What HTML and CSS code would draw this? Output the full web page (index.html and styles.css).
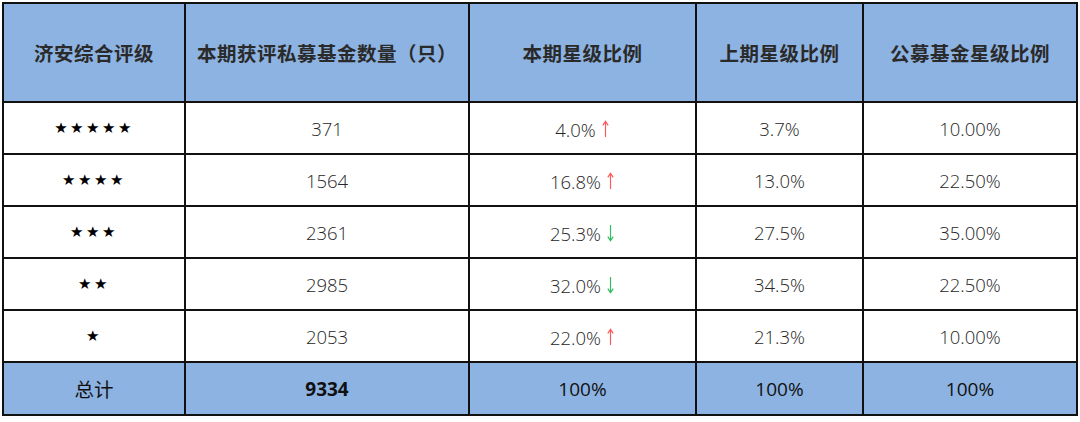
FILE: index.html
```html
<!DOCTYPE html>
<html lang="zh">
<head>
<meta charset="utf-8">
<link rel="stylesheet" href="styles.css">
</head>
<body>
<table class="rating">
  <colgroup>
    <col class="c1"><col class="c2"><col class="c3"><col class="c4"><col class="c5">
  </colgroup>
  <thead>
    <tr>
      <th>济安综合评级</th>
      <th>本期获评私募基金数量（只）</th>
      <th>本期星级比例</th>
      <th>上期星级比例</th>
      <th>公募基金星级比例</th>
    </tr>
  </thead>
  <tbody>
    <tr>
      <td class="stars">★★★★★</td>
      <td>371</td>
      <td><span class="pct">4.0%</span><svg class="arrow up" viewBox="0 0 10 20"><path d="M5 19V2M2 6L5 1.5L8 6"/></svg></td>
      <td>3.7%</td>
      <td>10.00%</td>
    </tr>
    <tr>
      <td class="stars">★★★★</td>
      <td>1564</td>
      <td><span class="pct">16.8%</span><svg class="arrow up" viewBox="0 0 10 20"><path d="M5 19V2M2 6L5 1.5L8 6"/></svg></td>
      <td>13.0%</td>
      <td>22.50%</td>
    </tr>
    <tr>
      <td class="stars">★★★</td>
      <td>2361</td>
      <td><span class="pct">25.3%</span><svg class="arrow down" viewBox="0 0 10 20"><path d="M5 1V18M2 14L5 18.5L8 14"/></svg></td>
      <td>27.5%</td>
      <td>35.00%</td>
    </tr>
    <tr>
      <td class="stars">★★</td>
      <td>2985</td>
      <td><span class="pct">32.0%</span><svg class="arrow down" viewBox="0 0 10 20"><path d="M5 1V18M2 14L5 18.5L8 14"/></svg></td>
      <td>34.5%</td>
      <td>22.50%</td>
    </tr>
    <tr>
      <td class="stars">★</td>
      <td>2053</td>
      <td><span class="pct">22.0%</span><svg class="arrow up" viewBox="0 0 10 20"><path d="M5 19V2M2 6L5 1.5L8 6"/></svg></td>
      <td>21.3%</td>
      <td>10.00%</td>
    </tr>
  </tbody>
  <tfoot>
    <tr>
      <td class="label">总计</td>
      <td class="bold">9334</td>
      <td>100%</td>
      <td>100%</td>
      <td>100%</td>
    </tr>
  </tfoot>
</table>
</body>
</html>
```
FILE: styles.css
```css
html, body {
  margin: 0;
  padding: 0;
  background: #ffffff;
}
body {
  padding: 2px 0 0 2px;
  font-family: "Open Sans", "Noto Sans CJK SC", sans-serif;
}
.rating {
  border-collapse: collapse;
  table-layout: fixed;
  width: 1074px;
}
.c1 { width: 182px; }
.c2 { width: 284px; }
.c3 { width: 227px; }
.c4 { width: 167px; }
.c5 { width: 214px; }

.rating th,
.rating td {
  border: 2px solid #111111;
  text-align: center;
  vertical-align: middle;
  padding: 0;
}
.rating th {
  height: 97px;
  background: #8db3e2;
  font-family: "Noto Sans CJK SC", sans-serif;
  font-weight: 700;
  font-size: 19.5px;
  color: #2a2a2a;
  letter-spacing: 0.5px;
}
.rating tbody td {
  height: 50px;
  font-size: 18.5px;
  color: #262626;
  font-weight: 300;
}
.rating td.stars {
  font-family: "DejaVu Sans", sans-serif;
  font-size: 15px;
  font-weight: 400;
  color: #000000;
  letter-spacing: 2.5px;
}
.rating tfoot td {
  height: 51px;
  background: #8db3e2;
  font-size: 19px;
  color: #111111;
}
.rating tfoot td.label {
  font-family: "Noto Sans CJK SC", sans-serif;
  font-size: 19.5px;
  font-weight: 400;
}
.rating tfoot td.bold {
  font-weight: 700;
}
.pct {
  vertical-align: middle;
}
.arrow {
  width: 9px;
  height: 20px;
  margin-left: 5px;
  vertical-align: middle;
  fill: none;
  stroke-width: 1.3;
}
.arrow.up { stroke: #ff5a5a; }
.arrow.down { stroke: #2ebd5f; }
```
